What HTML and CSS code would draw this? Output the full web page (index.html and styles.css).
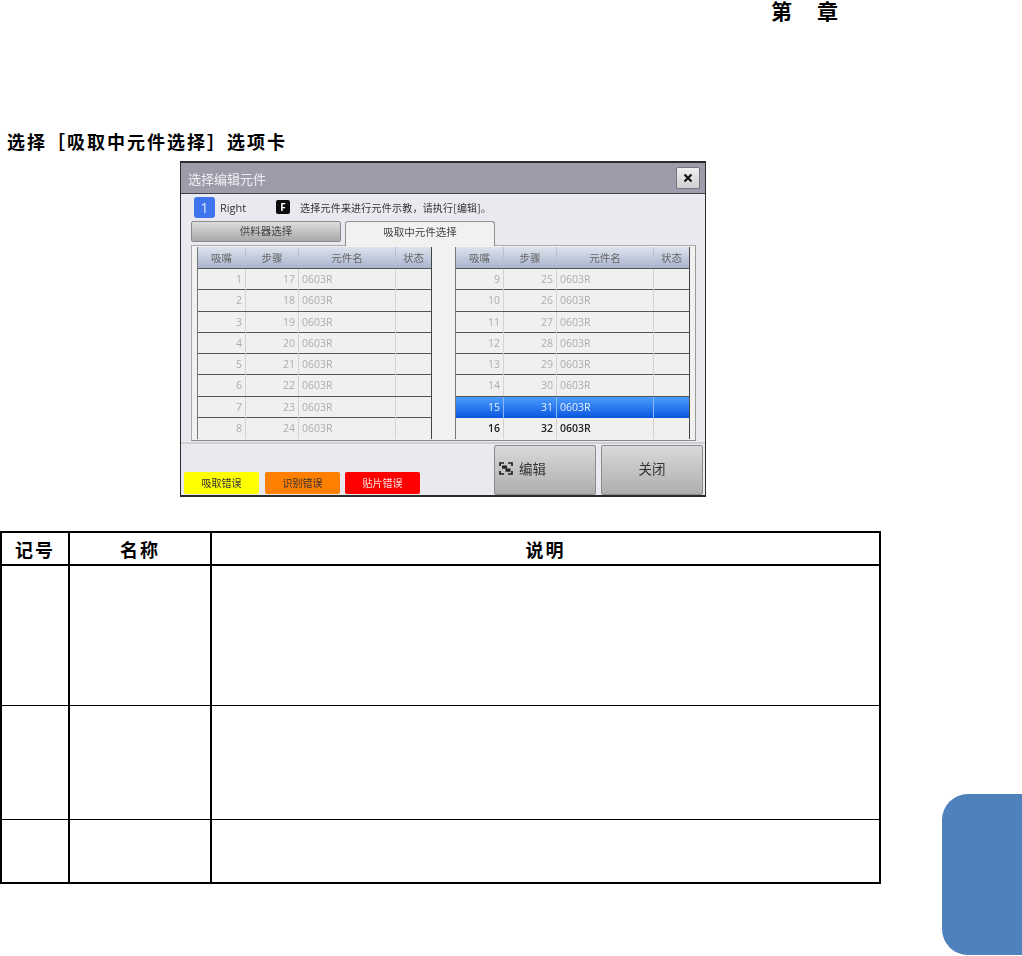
FILE: index.html
```html
<!DOCTYPE html>
<html lang="zh">
<head>
<meta charset="utf-8">
<title>选择吸取中元件选择</title>
<link rel="stylesheet" href="styles.css">
</head>
<body>
<div class="page">
  <header class="chapter"><span>第</span><span>章</span></header>
  <h2 class="heading">选择［吸取中元件选择］选项卡</h2>

  <section class="dialog">
    <div class="title-bar">
      <span>选择编辑元件</span>
      <button class="close-x" aria-label="关闭">
        <svg width="10" height="10" viewBox="0 0 10 10"><path d="M1.5 1.5l7 7M8.5 1.5l-7 7" stroke="#111" stroke-width="2.2" fill="none"/></svg>
      </button>
    </div>
    <div class="info">
      <span class="num-chip">1</span>
      <span class="side">Right</span>
      <span class="f-key">F</span>
      <span class="hint">选择元件来进行元件示教，请执行[编辑]。</span>
    </div>
    <div class="tabs">
      <div class="tab tab-off">供料器选择</div>
      <div class="tab tab-on">吸取中元件选择</div>
    </div>
    <div class="panel">
      <div class="grid">
        <div class="row head"><span>吸嘴</span><span>步骤</span><span>元件名</span><span>状态</span></div>
        <div class="row"><span class="n">1</span><span class="n">17</span><span>0603R</span><span></span></div>
        <div class="row"><span class="n">2</span><span class="n">18</span><span>0603R</span><span></span></div>
        <div class="row"><span class="n">3</span><span class="n">19</span><span>0603R</span><span></span></div>
        <div class="row"><span class="n">4</span><span class="n">20</span><span>0603R</span><span></span></div>
        <div class="row"><span class="n">5</span><span class="n">21</span><span>0603R</span><span></span></div>
        <div class="row"><span class="n">6</span><span class="n">22</span><span>0603R</span><span></span></div>
        <div class="row"><span class="n">7</span><span class="n">23</span><span>0603R</span><span></span></div>
        <div class="row"><span class="n">8</span><span class="n">24</span><span>0603R</span><span></span></div>
      </div>
      <div class="grid">
        <div class="row head"><span>吸嘴</span><span>步骤</span><span>元件名</span><span>状态</span></div>
        <div class="row"><span class="n">9</span><span class="n">25</span><span>0603R</span><span></span></div>
        <div class="row"><span class="n">10</span><span class="n">26</span><span>0603R</span><span></span></div>
        <div class="row"><span class="n">11</span><span class="n">27</span><span>0603R</span><span></span></div>
        <div class="row"><span class="n">12</span><span class="n">28</span><span>0603R</span><span></span></div>
        <div class="row"><span class="n">13</span><span class="n">29</span><span>0603R</span><span></span></div>
        <div class="row"><span class="n">14</span><span class="n">30</span><span>0603R</span><span></span></div>
        <div class="row selected"><span class="n">15</span><span class="n">31</span><span>0603R</span><span></span></div>
        <div class="row active"><span class="n">16</span><span class="n">32</span><span>0603R</span><span></span></div>
      </div>
    </div>
    <div class="footer">
      <div class="errors">
        <span class="err err-y">吸取错误</span>
        <span class="err err-o">识别错误</span>
        <span class="err err-r">贴片错误</span>
      </div>
      <div class="actions">
        <button class="action action-icon">
          <svg class="edit-icon" width="14" height="13" viewBox="0 0 14 13"><path d="M1 4V1h4M9 1h4v3M1 9v3h4M9 12h4V9" stroke="#222" stroke-width="1.7" fill="none"/><rect x="3" y="3.5" width="5" height="3.2" fill="#222"/><rect x="6.5" y="6.5" width="5" height="3.2" fill="#222"/></svg>
          <span>编辑</span>
        </button>
        <button class="action">关闭</button>
      </div>
    </div>
  </section>

  <table class="spec">
    <thead>
      <tr><th class="c-mark">记号</th><th class="c-name">名称</th><th>说明</th></tr>
    </thead>
    <tbody>
      <tr class="r1"><td></td><td></td><td></td></tr>
      <tr class="r2"><td></td><td></td><td></td></tr>
      <tr class="r3"><td></td><td></td><td></td></tr>
    </tbody>
  </table>

  <div class="edge-tab"></div>
</div>
</body>
</html>
```
FILE: styles.css
```css
* { box-sizing: border-box; }
html, body { margin: 0; padding: 0; background: #fff; }
body { font-family: "Noto Sans CJK SC", "Liberation Sans", sans-serif; }
.page { position: relative; width: 1022px; height: 956px; overflow: hidden; }

.chapter {
  display: flex; justify-content: flex-end; align-items: flex-start; gap: 25px;
  height: 22px; padding-right: 184px;
  font-size: 21px; font-weight: 700; color: #000; line-height: 21px;
}
.heading {
  margin: 108px 0 0; padding-left: 7px; height: 24px; line-height: 23px;
  font-size: 18px; font-weight: 700; letter-spacing: 2px; color: #000; white-space: nowrap;
}

.dialog {
  display: flex; flex-direction: column;
  width: 526px; height: 336px; margin: 7px 0 0 180px;
  border: 1px solid #2c2c2c; border-top-width: 2px; border-bottom-width: 2px;
  background: #e9eaf0; filter: blur(0.35px);
  font-family: "Noto Sans CJK SC", "Open Sans", sans-serif;
}
.title-bar {
  display: flex; justify-content: space-between; align-items: center;
  height: 31px; padding: 0 5px 0 7px; flex: none;
  background: #9e9bab; border-bottom: 1px solid #3f3f4a;
  color: #eeeef2; font-size: 13px;
}
.close-x {
  display: flex; align-items: center; justify-content: center;
  width: 24px; height: 22px; padding: 0;
  background: linear-gradient(#f0f0f0, #d0d0d0);
  border: 1px solid #77757f; border-radius: 2px;
}
.info { display: flex; align-items: center; height: 20px; margin-top: 3px; padding-left: 13px; flex: none; }
.num-chip {
  width: 21px; height: 21px; border-radius: 3px; background: #3f74ee; color: #dfe8ff;
  font: 14px/21px "Open Sans", sans-serif; text-align: center;
}
.side { width: 56px; margin-left: 5px; font: 11px "Open Sans", sans-serif; color: #333; }
.f-key {
  width: 14px; height: 14px; border-radius: 2px; background: #0c0c0c; color: #fff;
  font: 700 10px/14px "Open Sans", sans-serif; text-align: center;
}
.hint { margin-left: 10px; font-size: 10px; letter-spacing: 0.22px; color: #333; white-space: nowrap; }

.tabs { display: flex; gap: 4px; margin-top: 4px; padding-left: 10px; height: 24px; flex: none; position: relative; z-index: 1; }
.tab { width: 150px; text-align: center; font-size: 10.5px; color: #444; }
.tab-off {
  height: 21px; line-height: 17px;
  background: linear-gradient(#dedede, #a8a8a8); border: 1px solid #8a8a8a; border-radius: 2px;
}
.tab-on {
  height: 25px; line-height: 20px;
  background: #f1f1f1; border: 1px solid #8f8f8f; border-bottom: 0; border-radius: 3px 3px 0 0;
}
.panel {
  display: flex; gap: 23px; flex: none;
  width: 505px; height: 196px; margin-left: 10px; padding: 1px 5px 0;
  background: #f1f1f1; border: 1px solid #aaa; border-bottom-color: #888; border-right-color: #999;
}
.grid { width: 235px; height: 192px; border: 1px solid #444; border-top: 0; border-left-color: #777; flex: none; }
.row {
  display: grid; grid-template-columns: 48px 53px 97px 1fr;
  height: 21.3px; font: 10.5px/21px "Open Sans", "Noto Sans CJK SC", sans-serif; color: #adadad;
  background: #f0f0f0; border-bottom: 1px solid #555;
}
.row:last-child { border-bottom: 0; }
.row span { padding: 0 3px; border-right: 1px solid #d2d2d2; }
.row span:last-child { border-right: 0; }
.row .n { text-align: right; padding-right: 3px; }
.head {
  height: 22px; text-align: center; color: #666; font-family: "Noto Sans CJK SC", sans-serif;
  background: linear-gradient(#dde2ec, #a9b5cf); border-bottom: 1px solid #555;
}
.head span { border-right-color: #b9c1d3; }
.selected { background: linear-gradient(#4c9dff, #0a56df); color: #e6f0ff; border-bottom: 0; }
.selected span { border-right-color: #8db8f0; }
.active { color: #222; font-weight: 600; }

.footer {
  display: flex; justify-content: space-between; align-items: flex-end;
  flex: 1; padding: 0 2px 0 3px; margin-top: 1px;
  border-top: 2px solid #cfcfd4;
}
.errors { display: flex; gap: 6px; margin-bottom: 1px; }
.err {
  width: 75px; height: 22px; border-radius: 2px; text-align: center;
  font-size: 10px; line-height: 21px; color: #333;
}
.err-y { background: #ffff00; }
.err-o { background: #ff7f00; }
.err-r { background: #ff0000; color: #ffe0e0; margin-left: -1px; }
.actions { display: flex; gap: 5px; }
.action {
  display: flex; align-items: center; justify-content: center; gap: 6px;
  width: 102px; height: 50px; padding: 0 0 4px;
  background: linear-gradient(#d9d9d9, #aeaeae);
  border: 1px solid #8c8c8c; border-radius: 2px;
  font-family: "Noto Sans CJK SC", sans-serif; font-size: 13.5px; color: #333;
}
.action-icon { justify-content: flex-start; padding-left: 4px; }
.edit-icon { flex: none; }

.spec {
  width: 881px; margin-top: 34px; border-collapse: collapse; table-layout: fixed;
  border: 2px solid #000;
}
.spec th, .spec td { padding: 0; border: 1px solid #000; border-left-width: 2px; }
.spec th {
  height: 33px; font-size: 18px; font-weight: 700; letter-spacing: 2px; line-height: 30px; text-align: center;
  border-bottom-width: 2px; color: #000;
}
.c-mark { width: 68px; }
.c-name { width: 142px; }
.r1 td { height: 140px; }
.r2 td { height: 114px; }
.r3 td { height: 64px; }

.edge-tab {
  position: absolute; right: 0; top: 794px; width: 80px; height: 161px;
  background: #4f81bd; border-radius: 26px 0 0 26px;
}
```
